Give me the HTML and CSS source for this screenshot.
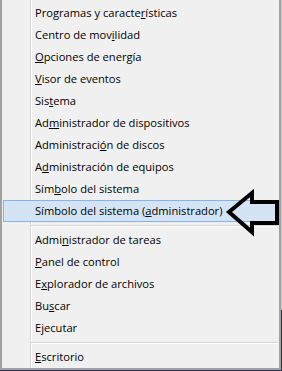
FILE: index.html
```html
<!DOCTYPE html>
<html lang="es">
<head>
  <meta charset="UTF-8" />
  <title>Menú de vínculos rápidos</title>
  <link rel="stylesheet" href="styles.css">
</head>
<body>
  <div class="menu">
    <ul class="group">
      <li class="item">Programas y caracte<u>r</u>ísticas</li>
      <li class="item">Centro de mov<u>i</u>lidad</li>
      <li class="item"><u>O</u>pciones de energía</li>
      <li class="item"><u>V</u>isor de eventos</li>
      <li class="item">Sis<u>t</u>ema</li>
      <li class="item">Ad<u>m</u>inistrador de dispositivos</li>
      <li class="item">Administraci<u>ó</u>n de discos</li>
      <li class="item">A<u>d</u>ministración de equipos</li>
      <li class="item">Sím<u>b</u>olo del sistema</li>
      <li class="item active">Símbolo del sistema (<u>a</u>dministrador)</li>
    </ul>
    <div class="sep"></div>
    <ul class="group">
      <li class="item">Admi<u>n</u>istrador de tareas</li>
      <li class="item"><u>P</u>anel de control</li>
      <li class="item">E<u>x</u>plorador de archivos</li>
      <li class="item">Bu<u>s</u>car</li>
      <li class="item">E<u>j</u>ecutar</li>
    </ul>
    <div class="sep"></div>
    <ul class="group">
      <li class="item"><u>E</u>scritorio</li>
    </ul>
  </div>

  <svg class="arrow" width="282" height="371" viewBox="0 0 282 371">
    <polygon points="229,212 252,193 252,202 277,202 277,223 252,223 252,232"
             fill="none" stroke="#000" stroke-width="4" stroke-linejoin="miter" />
  </svg>
</body>
</html>
```

FILE: styles.css
```css
body {
  margin: 0;
  height: 371px;
  overflow: hidden;
  background: linear-gradient(to bottom, #c9c9c9 0, #c9c9c9 310px, #2c2f5a 310px);
  font-family: "Segoe UI", "Open Sans", "Noto Sans", sans-serif;
  font-size: 11.15px;
  color: #000;
}
.menu {
  width: 281px;
  box-sizing: border-box;
  padding-top: 2px;
  border: 2px solid #a0a0a0;
  border-top: none;
  background: linear-gradient(to right, #f0f0f0 28px, #d7d7d7 28px, #d7d7d7 29px, #fff 29px, #fff 30px, #f0f0f0 30px);
}
.group {
  list-style: none;
  margin: 0;
  padding: 0;
}
.item {
  display: flex;
  align-items: center;
  height: 22px;
  box-sizing: border-box;
  margin: 0 1px;
  padding-left: 31px;
  padding-bottom: 1px;
  border: 1px solid transparent;
  white-space: nowrap;
}
.item.active {
  background: #d4e4f5;
  border-color: #84b3e6;
}
.sep {
  height: 0;
  margin: 3px 1px 2px 29px;
  border-top: 1px solid #d7d7d7;
  border-bottom: 1px solid #fff;
}
.arrow {
  position: absolute;
  left: 0;
  top: 0;
  pointer-events: none;
}
```
